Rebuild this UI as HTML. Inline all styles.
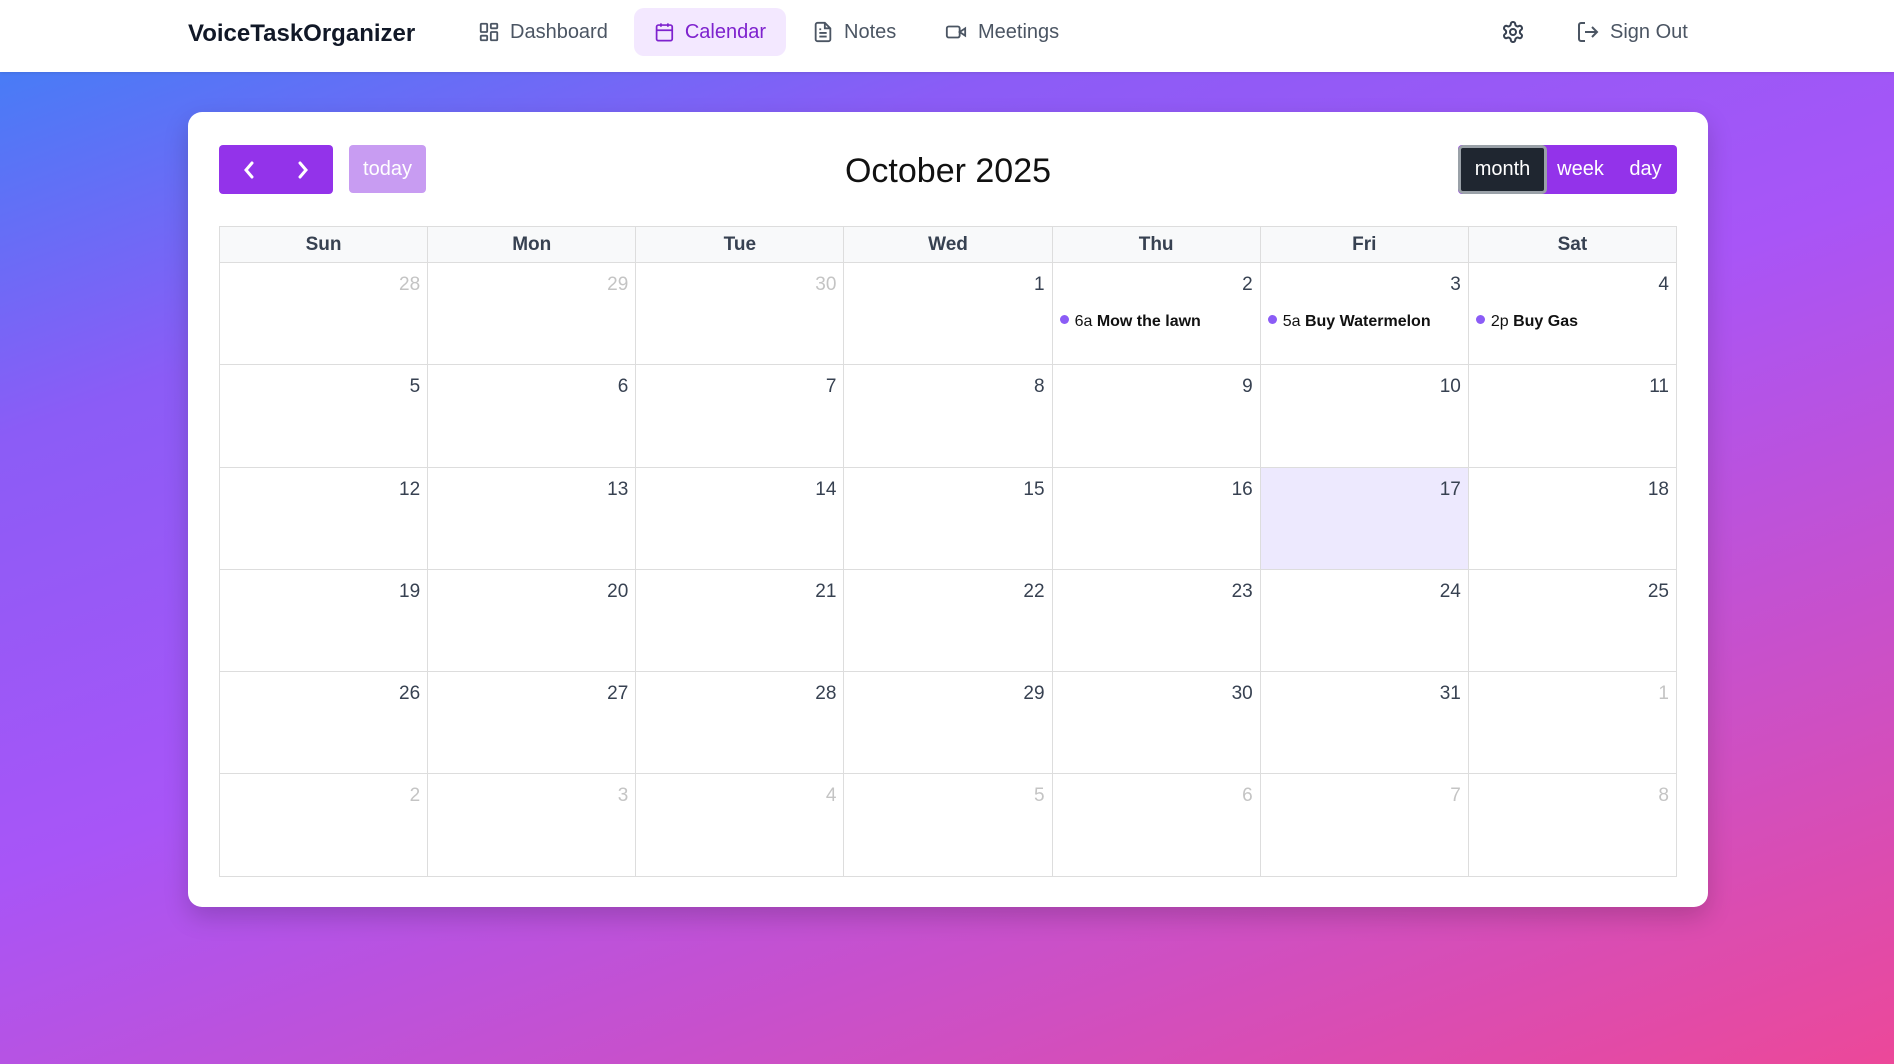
<!DOCTYPE html>
<html><head><meta charset="utf-8"><style>
*{box-sizing:border-box;margin:0;padding:0}
html,body{width:1894px;height:1064px;overflow:hidden}
body{font-family:"Liberation Sans",sans-serif;background:linear-gradient(160deg,#3b82f6 0%,#8b5cf6 25%,#a855f7 50%,#d04fc0 80%,#ec4899 100%);position:relative}
nav{position:absolute;left:0;top:0;width:1894px;height:72px;background:#fff;box-shadow:0 1px 3px rgba(0,0,0,.1)}
.logo{position:absolute;left:188px;top:20px;font-size:24px;font-weight:bold;color:#111827}
.ni{position:absolute;top:8px;height:48px;display:flex;align-items:center;font-size:20px;color:#4b5563;padding:0 20px;border-radius:10px}
.ni svg{margin-right:10px}
.ni.act{background:#f3e8ff;color:#7e22ce}
.card{position:absolute;left:188px;top:112px;width:1520px;height:795px;background:#fff;border-radius:14px;box-shadow:0 10px 25px rgba(0,0,0,.18)}
.btn{position:absolute;display:flex;align-items:center;justify-content:center;color:#fff;border-radius:4px;font-size:20px}
.title{position:absolute;left:0;width:1520px;top:40px;text-align:center;font-size:34px;color:#111}
table{position:absolute;left:31px;top:114px;width:1458px;border-collapse:collapse;table-layout:fixed}
th{height:36px;background:#f8f9fa;border:1px solid #dddddd;font-size:19px;color:#374151;font-weight:bold}
td{height:102.3px;border:1px solid #dddddd;vertical-align:top;text-align:right;padding:11px 7px 0 0;font-size:19px;color:#374151;position:relative}
td.o{color:#c4c4c4}
td.t{background:#ede9fe}
.ev{position:absolute;left:7px;top:50px;font-size:16px;color:#111;white-space:nowrap;text-align:left}
.ev i{display:inline-block;width:9px;height:9px;border-radius:50%;background:#8b5cf6;margin-right:6px;vertical-align:2px}
.ev b{font-weight:bold}
</style></head><body>
<nav>
<div class="logo">VoiceTaskOrganizer</div>
<div class="ni" style="left:458px"><svg width="22" height="22" viewBox="0 0 24 24" fill="none" stroke="#4b5563" stroke-width="2"><rect x="3" y="3" width="7" height="9" rx="1"/><rect x="14" y="3" width="7" height="5" rx="1"/><rect x="14" y="12" width="7" height="9" rx="1"/><rect x="3" y="16" width="7" height="5" rx="1"/></svg>Dashboard</div>
<div class="ni act" style="left:634px;width:152px"><svg width="22" height="22" viewBox="0 0 24 24" fill="none" stroke="#7e22ce" stroke-width="2"><rect x="3" y="4" width="18" height="18" rx="2"/><path d="M16 2v4M8 2v4M3 10h18"/></svg>Calendar</div>
<div class="ni" style="left:792px"><svg width="22" height="22" viewBox="0 0 24 24" fill="none" stroke="#4b5563" stroke-width="2"><path d="M14 2H6a2 2 0 0 0-2 2v16a2 2 0 0 0 2 2h12a2 2 0 0 0 2-2V8z"/><path d="M14 2v6h6M16 13H8M16 17H8M10 9H8"/></svg>Notes</div>
<div class="ni" style="left:924px"><svg width="24" height="22" viewBox="0 0 24 24" fill="none" stroke="#4b5563" stroke-width="2"><rect x="2" y="6" width="14" height="12" rx="2"/><path d="M22 8l-6 4 6 4z"/></svg>Meetings</div>
<div class="ni" style="left:1481px"><svg width="24" height="24" viewBox="0 0 24 24" fill="none" stroke="#374151" stroke-width="2"><path d="M12.22 2h-.44a2 2 0 0 0-2 2v.18a2 2 0 0 1-1 1.73l-.43.25a2 2 0 0 1-2 0l-.15-.08a2 2 0 0 0-2.730.73l-.22.38a2 2 0 0 0 .73 2.73l.15.1a2 2 0 0 1 1 1.72v.51a2 2 0 0 1-1 1.74l-.15.09a2 2 0 0 0-.73 2.73l.22.38a2 2 0 0 0 2.73.73l.15-.08a2 2 0 0 1 2 0l.43.25a2 2 0 0 1 1 1.73V20a2 2 0 0 0 2 2h.44a2 2 0 0 0 2-2v-.18a2 2 0 0 1 1-1.73l.43-.25a2 2 0 0 1 2 0l.15.08a2 2 0 0 0 2.73-.73l.22-.39a2 2 0 0 0-.73-2.73l-.15-.08a2 2 0 0 1-1-1.74v-.5a2 2 0 0 1 1-1.74l.15-.09a2 2 0 0 0 .73-2.730l-.22-.38a2 2 0 0 0-2.73-.73l-.15.08a2 2 0 0 1-2 0l-.43-.25a2 2 0 0 1-1-1.73V4a2 2 0 0 0-2-2z"/><circle cx="12" cy="12" r="3"/></svg></div>
<div class="ni" style="left:1556px"><svg width="24" height="24" viewBox="0 0 24 24" fill="none" stroke="#4b5563" stroke-width="2"><path d="M9 21H5a2 2 0 0 1-2-2V5a2 2 0 0 1 2-2h4M16 17l5-5-5-5M21 12H9"/></svg>Sign Out</div>
</nav>
<div class="card">
<div class="btn" style="left:31px;top:33px;width:114px;height:49px;background:#9333ea"><svg width="114" height="49" viewBox="0 0 114 49" fill="none" stroke="#fff" stroke-width="3" stroke-linecap="round"><path d="M33 18l-6 7 6 7M81 18l6 7-6 7"/></svg></div>
<div class="btn" style="left:161px;top:33px;width:77px;height:48px;background:#c89cf2">today</div>
<div class="title">October 2025</div>
<div class="btn" style="left:1270px;top:33px;width:219px;height:49px;background:#9333ea;justify-content:flex-start">
<div style="width:89px;height:49px;background:#1f2630;border:3px solid #9aa1a8;border-radius:5px;display:flex;align-items:center;justify-content:center">month</div>
<div style="width:67px;text-align:center">week</div><div style="width:63px;text-align:center">day</div></div>
<table>
<tr><th>Sun</th><th>Mon</th><th>Tue</th><th>Wed</th><th>Thu</th><th>Fri</th><th>Sat</th></tr>
<tr><td class="o">28</td><td class="o">29</td><td class="o">30</td><td>1</td><td>2<div class="ev"><i></i>6a <b>Mow the lawn</b></div></td><td>3<div class="ev"><i></i>5a <b>Buy Watermelon</b></div></td><td>4<div class="ev"><i></i>2p <b>Buy Gas</b></div></td></tr>
<tr><td>5</td><td>6</td><td>7</td><td>8</td><td>9</td><td>10</td><td>11</td></tr>
<tr><td>12</td><td>13</td><td>14</td><td>15</td><td>16</td><td class="t">17</td><td>18</td></tr>
<tr><td>19</td><td>20</td><td>21</td><td>22</td><td>23</td><td>24</td><td>25</td></tr>
<tr><td>26</td><td>27</td><td>28</td><td>29</td><td>30</td><td>31</td><td class="o">1</td></tr>
<tr><td class="o">2</td><td class="o">3</td><td class="o">4</td><td class="o">5</td><td class="o">6</td><td class="o">7</td><td class="o">8</td></tr>
</table>
</div>
</body></html>
